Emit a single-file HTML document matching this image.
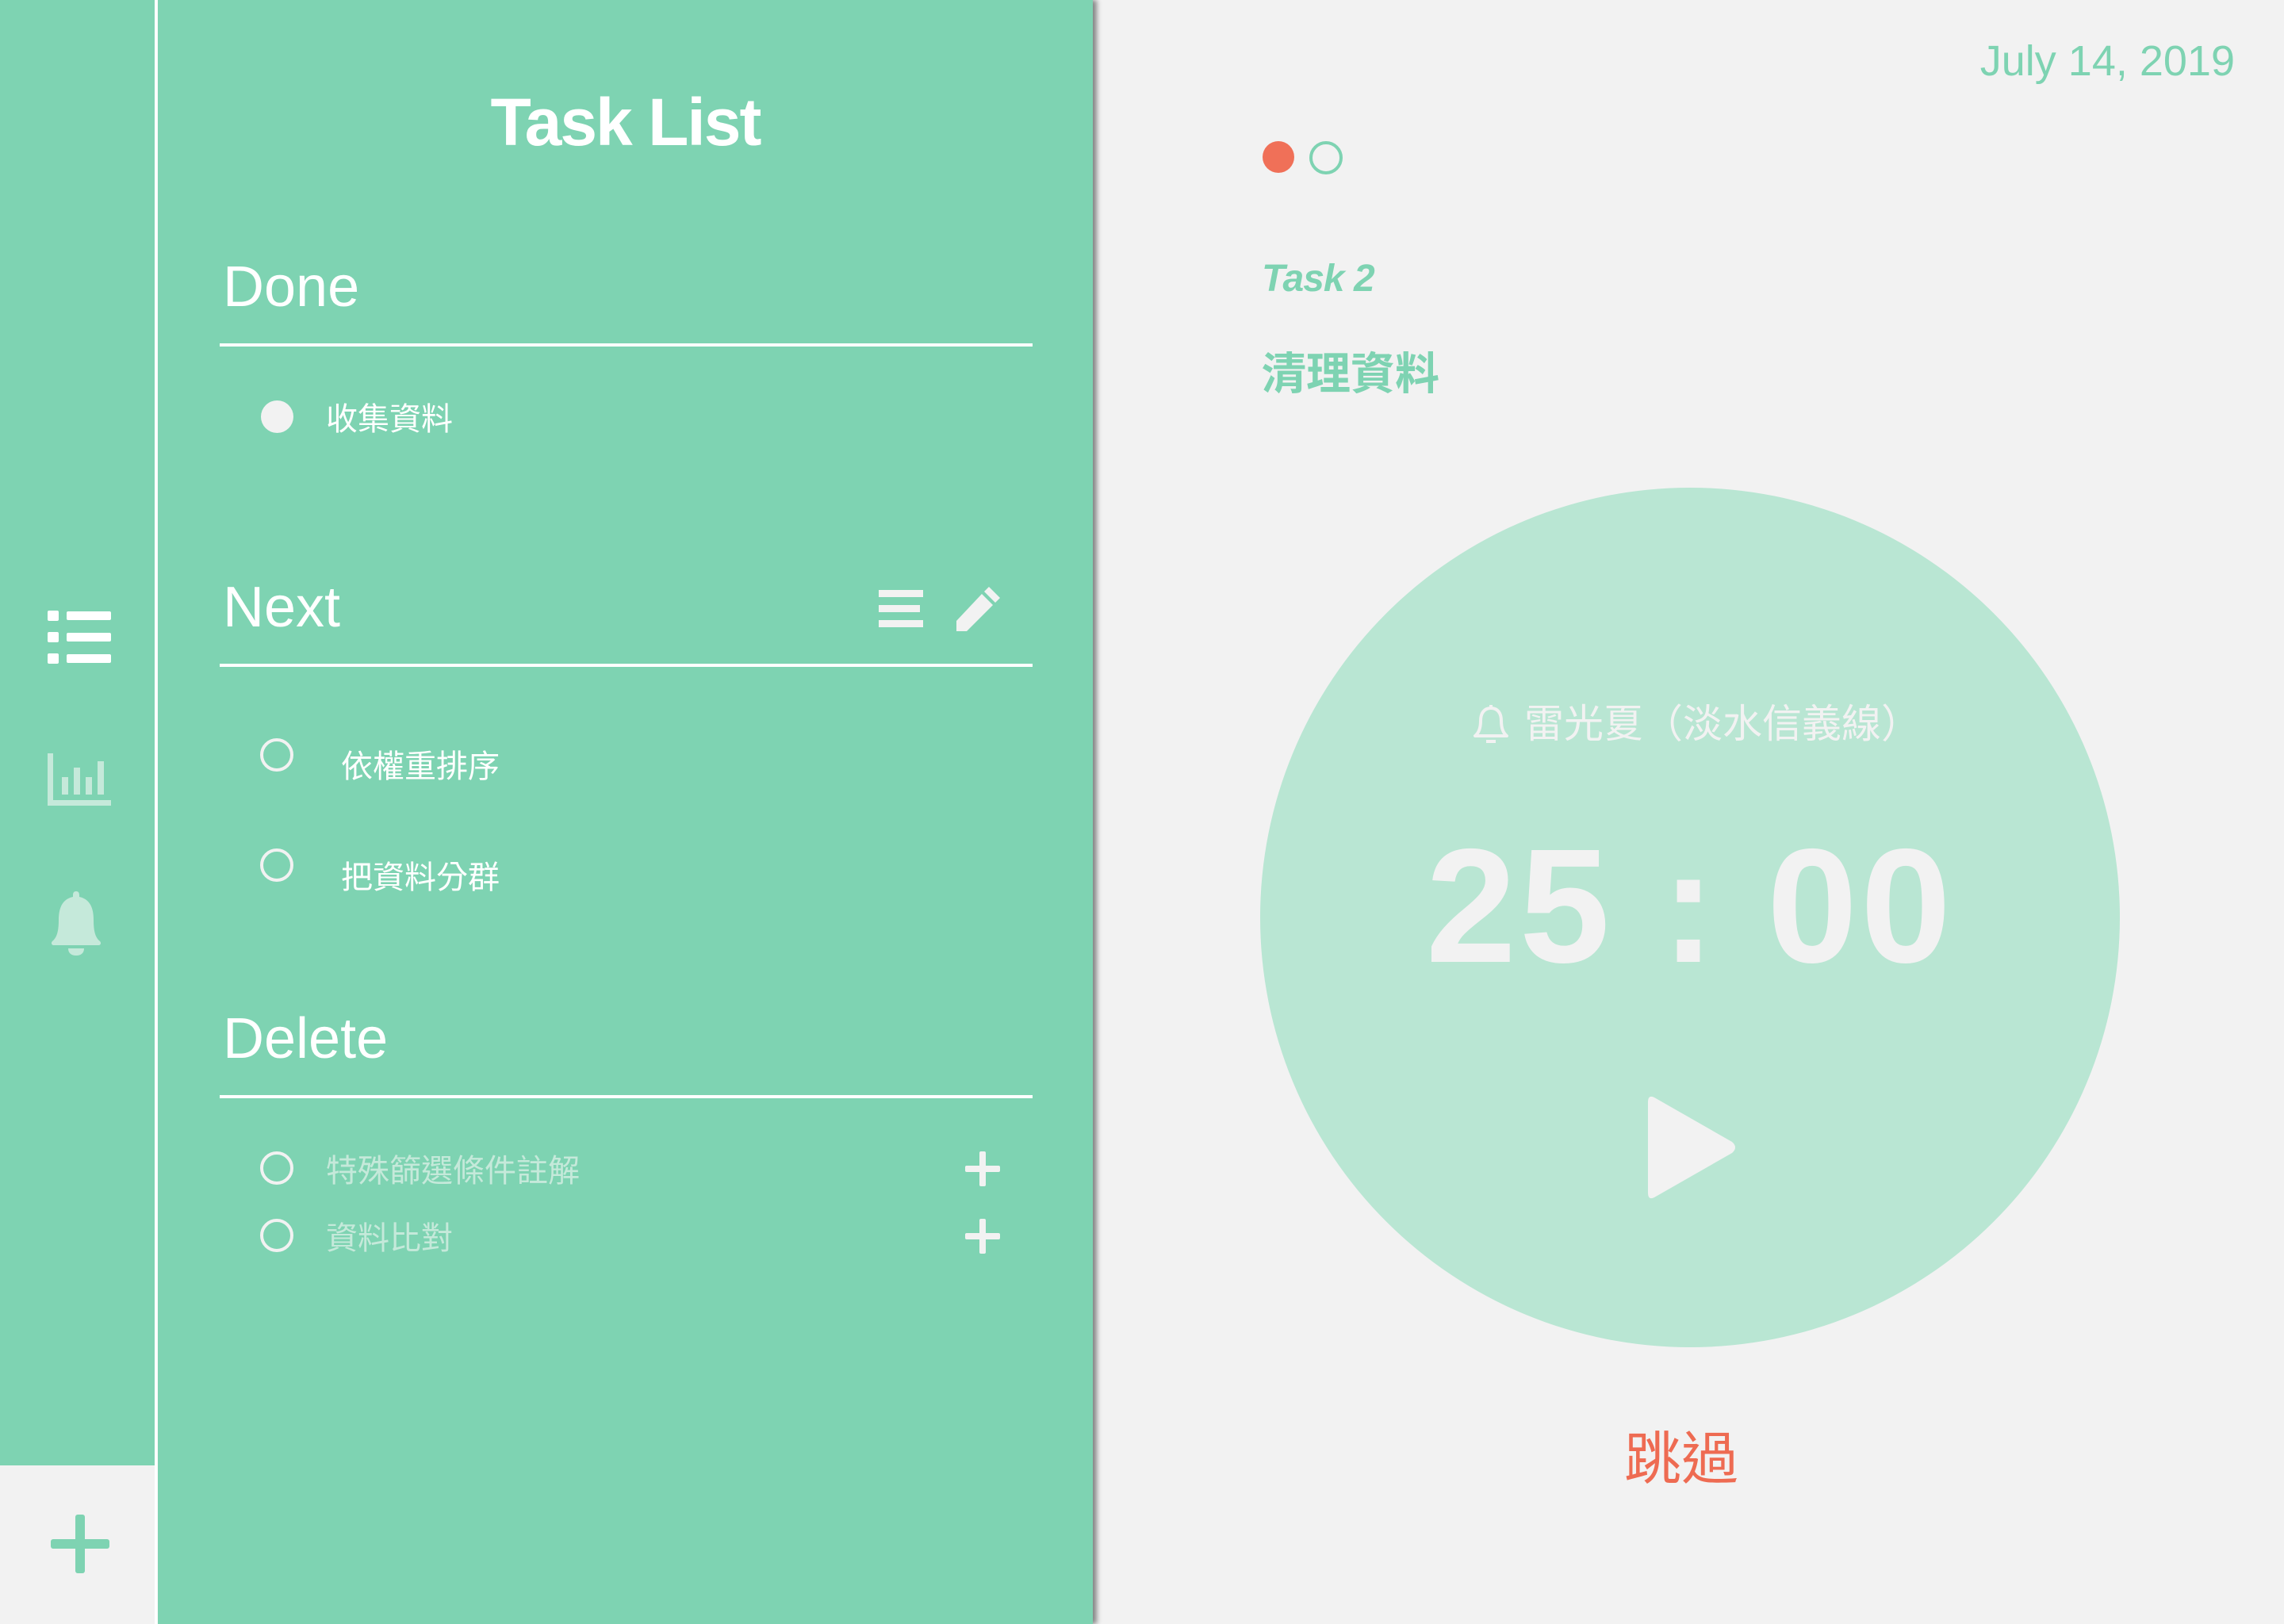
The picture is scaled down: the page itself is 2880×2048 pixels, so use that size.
<!DOCTYPE html>
<html><head><meta charset="utf-8"><style>
*{margin:0;padding:0;box-sizing:border-box}
body{width:2880px;height:2048px;background:#f2f2f2;position:relative;overflow:hidden;font-family:"Liberation Sans","Noto Sans CJK TC",sans-serif}
.a{position:absolute}
.g{background:#7ed3b2}
.h{color:#fff;font-size:72px;line-height:1}
.ln{height:4px;background:#fff;left:277px;width:1025px}
.cjk{font-family:"Noto Sans CJK TC",sans-serif;font-size:40px;line-height:1;color:#fff}
.oc{width:42px;height:42px;border:4px solid #f2f2f2;border-radius:50%}
</style></head><body>
<div class="a g" style="left:0;top:0;width:195px;height:1848px"></div>
<div class="a" style="left:195px;top:0;width:4px;height:2048px;background:#fff"></div>
<div class="a g" style="left:199px;top:0;width:1179px;height:2048px;box-shadow:5px 0 6px rgba(0,0,0,.45)"></div>

<svg class="a" style="left:58px;top:768px" width="84" height="72" viewBox="0 0 84 72">
<g fill="#fff"><rect x="2" y="2" width="14" height="13" rx="2"/><rect x="2" y="29" width="14" height="13" rx="2"/><rect x="2" y="56" width="14" height="13" rx="2"/>
<rect x="26" y="3" width="56" height="11" rx="2"/><rect x="26" y="30" width="56" height="11" rx="2"/><rect x="26" y="57" width="56" height="11" rx="2"/></g></svg>
<svg class="a" style="left:58px;top:950px" width="84" height="66" viewBox="0 0 84 66">
<g fill="#c5e9da"><rect x="2" y="0" width="7" height="66"/><rect x="2" y="59" width="80" height="7"/><rect x="20" y="30" width="8" height="22"/><rect x="35" y="18" width="8" height="34"/><rect x="50" y="30" width="8" height="22"/><rect x="65" y="10" width="8" height="42"/></g></svg>
<svg class="a" style="left:58px;top:1122px" width="76" height="84" viewBox="0 0 76 84">
<g fill="#c5e9da"><path d="M38 2c-3 0-4 2-4 5v2C20 12 16 24 16 38c0 14-2 22-8 27-2 2-1 5 2 5h56c3 0 4-3 2-5-6-5-8-13-8-27 0-14-4-26-18-29V7c0-3-1-5-4-5z"/><path d="M28 74h20c0 6-4 9-10 9s-10-3-10-9z"/></g></svg>
<svg class="a" style="left:64px;top:1910px" width="74" height="74" viewBox="0 0 74 74"><g fill="#7ed3b2"><rect x="31" y="0" width="12" height="74" rx="3"/><rect x="0" y="31" width="74" height="12" rx="3"/></g></svg>

<div class="a" style="left:199px;width:1179px;top:112px;text-align:center;color:#fff;font-weight:bold;font-size:84px;line-height:1;letter-spacing:-2px">Task List</div>

<div class="a h" style="left:281px;top:326px">Done</div>
<div class="a ln" style="top:433px"></div>
<div class="a" style="left:329px;top:505px;width:41px;height:41px;border-radius:50%;background:#f2f2f2"></div>
<div class="a cjk" style="left:411px;top:505px">收集資料</div>

<div class="a h" style="left:281px;top:730px">Next</div>
<svg class="a" style="left:1108px;top:744px" width="56" height="48" viewBox="0 0 56 48"><g fill="#f2f2f2"><rect x="0" y="0" width="56" height="9"/><rect x="0" y="19" width="52" height="9"/><rect x="0" y="38" width="56" height="9"/></g></svg>
<svg class="a" style="left:1203px;top:738px" width="60" height="60" viewBox="0 0 60 60"><g fill="#f2f2f2"><path d="M44 2l14 14-6 6-14-14z"/><path d="M35 11l14 14L16 58H3V45z"/></g></svg>
<div class="a ln" style="top:837px"></div>
<div class="a oc" style="left:328px;top:931px"></div>
<div class="a cjk" style="left:430px;top:943px">依權重排序</div>
<div class="a oc" style="left:328px;top:1070px"></div>
<div class="a cjk" style="left:430px;top:1083px">把資料分群</div>

<div class="a h" style="left:281px;top:1274px">Delete</div>
<div class="a ln" style="top:1381px"></div>
<div class="a oc" style="left:328px;top:1452px"></div>
<div class="a cjk" style="left:411px;top:1453px;color:#c5e9da">特殊篩選條件註解</div>
<div class="a oc" style="left:328px;top:1537px"></div>
<div class="a cjk" style="left:411px;top:1538px;color:#c5e9da">資料比對</div>
<svg class="a" style="left:1217px;top:1452px" width="44" height="44" viewBox="0 0 44 44"><g fill="#f2f2f2"><rect x="18" y="0" width="8" height="44" rx="2"/><rect x="0" y="18" width="44" height="8" rx="2"/></g></svg>
<svg class="a" style="left:1217px;top:1537px" width="44" height="44" viewBox="0 0 44 44"><g fill="#f2f2f2"><rect x="18" y="0" width="8" height="44" rx="2"/><rect x="0" y="18" width="44" height="8" rx="2"/></g></svg>

<div class="a" style="right:62px;top:50px;color:#7ed3b2;font-size:54px;line-height:1">July 14, 2019</div>
<div class="a" style="left:1592px;top:178px;width:40px;height:40px;border-radius:50%;background:#f07058"></div>
<div class="a" style="left:1651px;top:178px;width:42px;height:42px;border-radius:50%;border:4px solid #7ed3b2"></div>
<div class="a" style="left:1591px;top:328px;color:#7ed3b2;font-size:48px;font-weight:bold;font-style:italic;line-height:1;letter-spacing:-1px">Task 2</div>
<div class="a" style="left:1591px;top:440px;color:#7ed3b2;font-size:56px;font-weight:bold;line-height:1;font-family:'Noto Sans CJK TC',sans-serif">清理資料</div>

<div class="a" style="left:1589px;top:615px;width:1084px;height:1084px;border-radius:50%;background:#b9e6d3"></div>
<svg class="a" style="left:1856px;top:885px" width="48" height="56" viewBox="0 0 48 56"><g fill="none" stroke="#f2f2f2" stroke-width="4" stroke-linejoin="round"><path d="M24 4v4M24 8c-9 0-13 7-13 16 0 9-2 15-7 19h40c-5-4-7-10-7-19 0-9-4-16-13-16z"/><path d="M18 50h12"/></g></svg>
<div class="a" style="left:1922px;top:884px;color:#f2f2f2;font-size:50px;line-height:1;font-family:'Noto Sans CJK TC',sans-serif">雷光夏（淡水信義線）</div>
<div class="a" style="left:1589px;width:1084px;top:1040px;text-align:center;color:#f2f2f2;font-size:205px;font-weight:bold;line-height:1;letter-spacing:4px">25 : 00</div>
<svg class="a" style="left:2074px;top:1380px" width="118" height="134" viewBox="0 0 118 134"><path d="M12 4Q4 0 4 10V124Q4 134 12 130L110 74Q118 67 110 60Z" fill="#f2f2f2"/></svg>
<div class="a" style="left:2048px;top:1798px;color:#ee6b52;font-size:72px;line-height:1;font-family:'Noto Sans CJK TC',sans-serif">跳過</div>
</body></html>
